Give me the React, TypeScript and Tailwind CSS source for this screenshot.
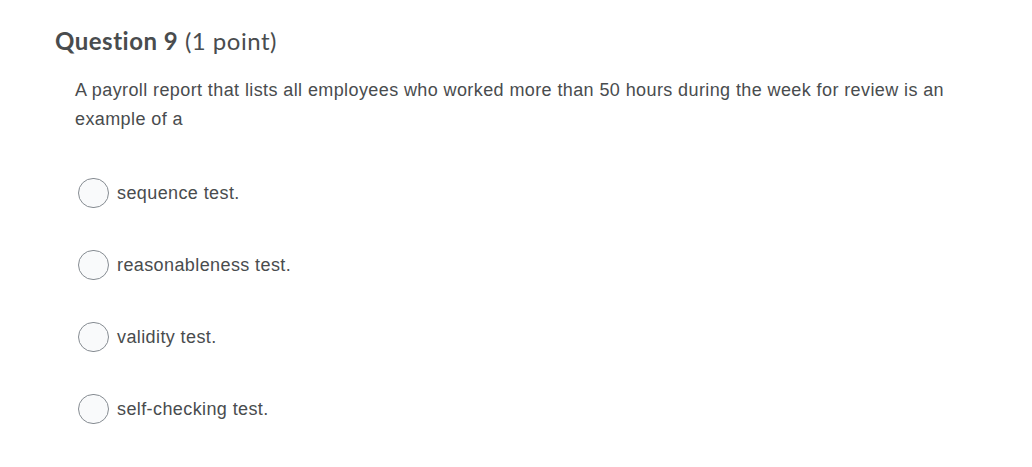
const options = ['sequence test.', 'reasonableness test.', 'validity test.', 'self-checking test.'];

export default function App() {
  return (
    <div className="w-[1032px] h-[467px] bg-white text-[#494c4e]">
      <div className="pl-[55px] pt-[25px]">
        <h2 className="font-['Lato',sans-serif] text-[24px] leading-[32px] tracking-[0.5px] text-[#494c4e]">
          <span className="font-bold">Question 9</span> (1 point)
        </h2>
        <div className="pl-[20px] pr-[60px] pt-[19px] font-['Liberation_Sans',Arial,sans-serif] text-[18px] leading-[29px] tracking-[0.4px] text-[#494c4e]">
          <p>
            A payroll report that lists all employees who worked more than 50 hours during the week for review is an
            example of a
          </p>
          <div className="flex flex-col gap-[42px] pt-[44px] pl-[3px]">
            {options.map((o) => (
              <label key={o} className="flex items-center gap-[8px] cursor-pointer">
                <span className="w-[31px] h-[30px] rounded-full border border-[#868c92] bg-[#f9fafb] shrink-0" />
                <span>{o}</span>
              </label>
            ))}
          </div>
        </div>
      </div>
    </div>
  );
}
